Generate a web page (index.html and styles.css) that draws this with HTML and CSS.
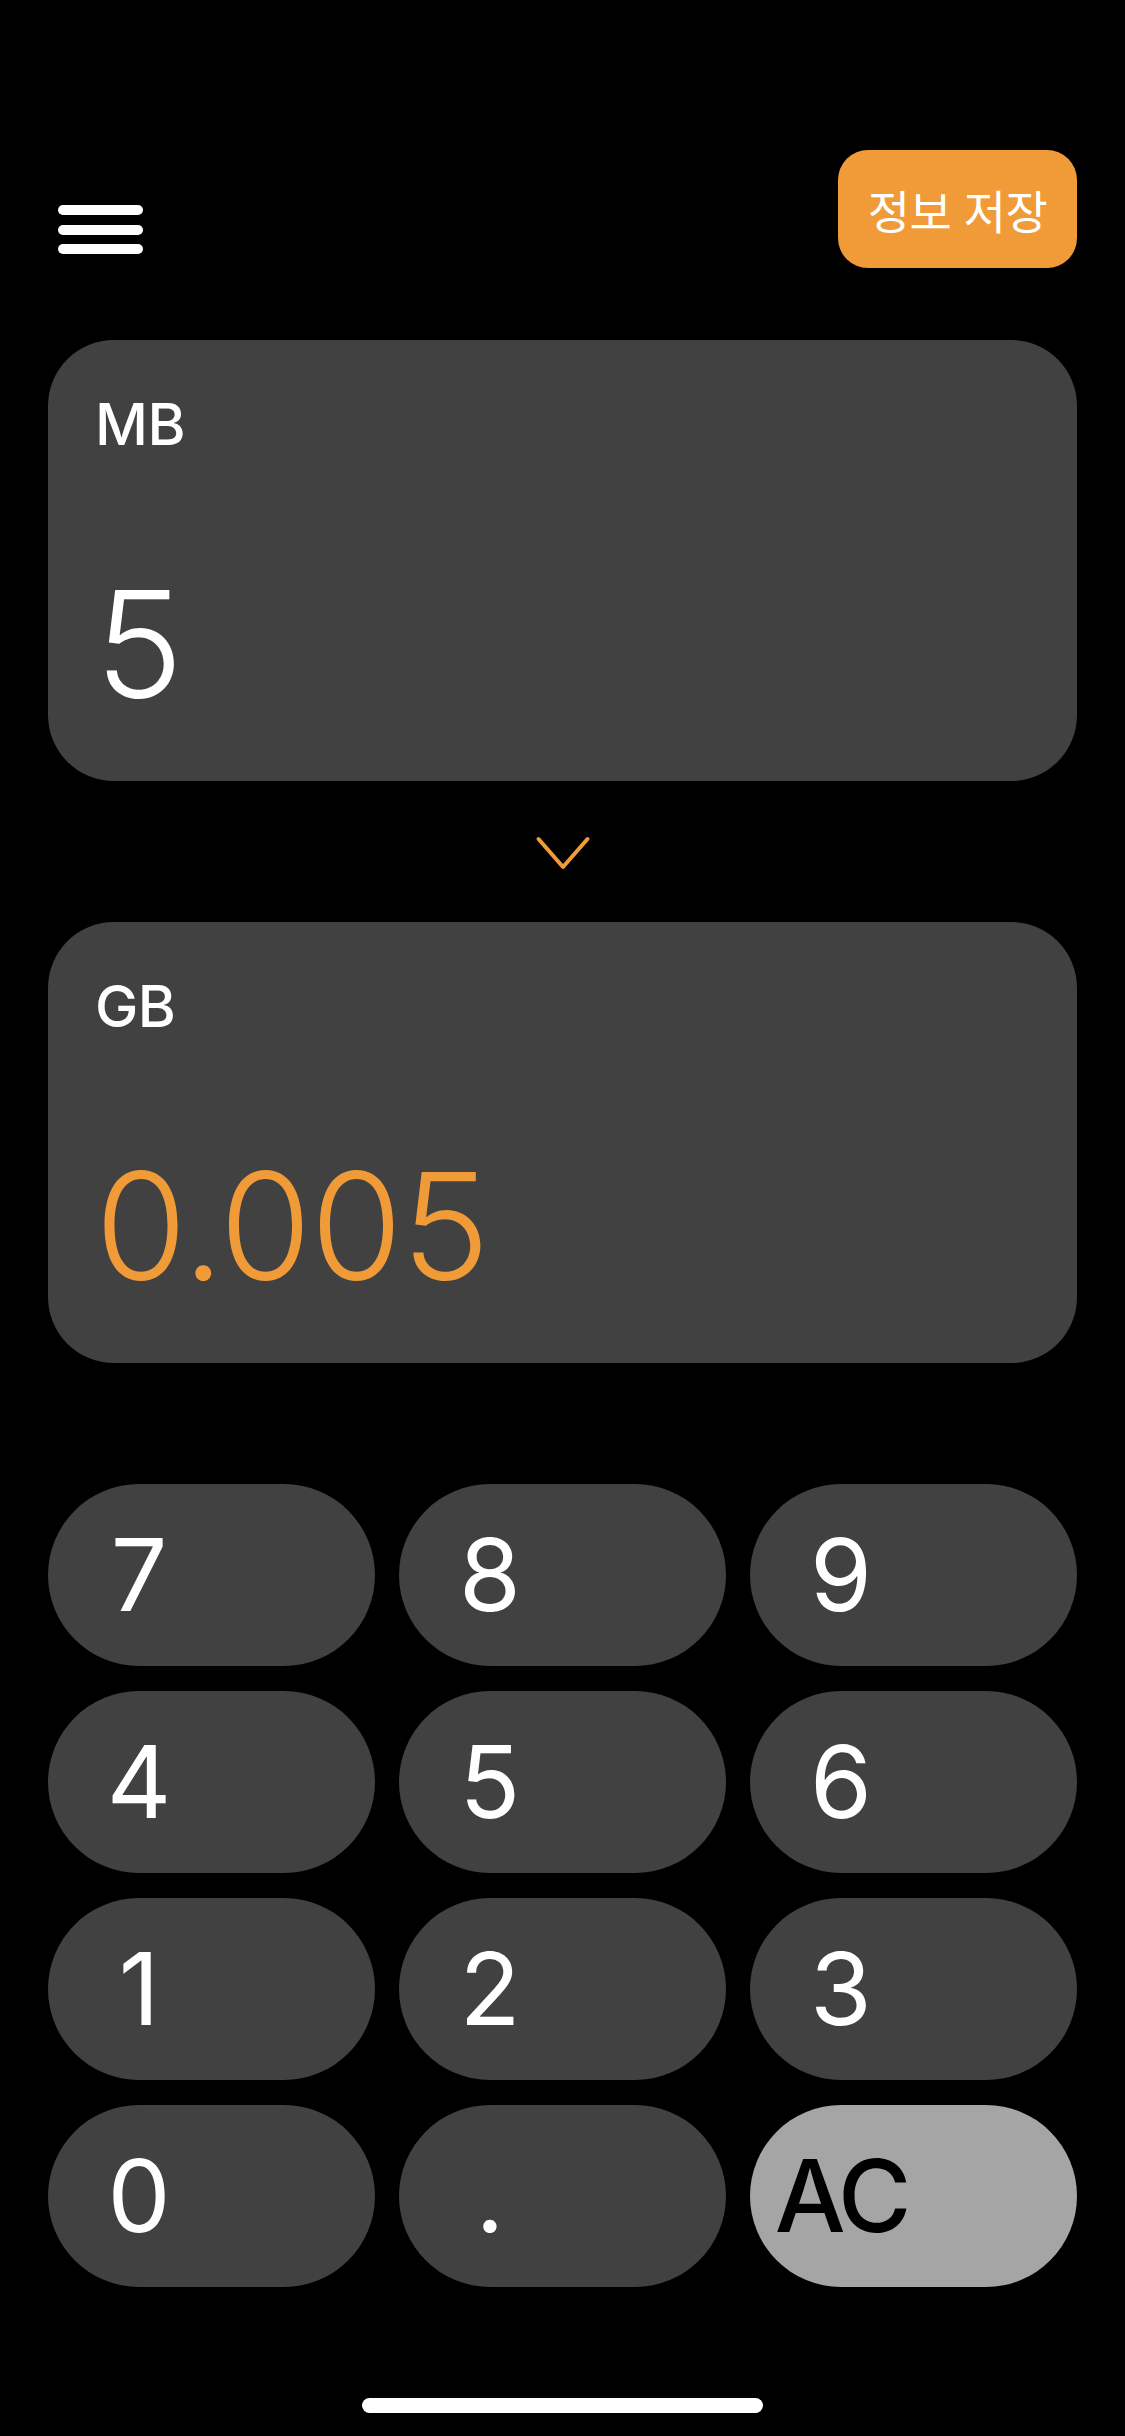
FILE: index.html
```html
<!DOCTYPE html>
<html lang="ko">
<head>
<meta charset="utf-8">
<title>MB → GB</title>
<link rel="stylesheet" href="styles.css">
</head>
<body>
<div class="screen">
  <header class="topbar">
    <div class="menu" aria-label="menu">
      <span class="menu-line"></span>
      <span class="menu-line"></span>
      <span class="menu-line"></span>
    </div>
    <button class="save-btn">정보 저장</button>
  </header>

  <section class="card">
    <div class="unit">MB</div>
    <div class="value">5</div>
  </section>

  <div class="arrow-row">
    <svg class="chevron" width="56" height="34" viewBox="0 0 56 34">
      <polyline points="3.5,3 28,31 52.5,3" fill="none" stroke="#F09A38" stroke-width="4" stroke-linecap="round" stroke-linejoin="round"/>
    </svg>
  </div>

  <section class="card">
    <div class="unit">GB</div>
    <div class="value result">0.005</div>
  </section>

  <div class="keypad">
    <button class="key"><span class="key-label">7</span></button>
    <button class="key"><span class="key-label">8</span></button>
    <button class="key"><span class="key-label">9</span></button>
    <button class="key"><span class="key-label">4</span></button>
    <button class="key"><span class="key-label">5</span></button>
    <button class="key"><span class="key-label">6</span></button>
    <button class="key"><span class="key-label">1</span></button>
    <button class="key"><span class="key-label">2</span></button>
    <button class="key"><span class="key-label">3</span></button>
    <button class="key"><span class="key-label">0</span></button>
    <button class="key"><span class="key-label">.</span></button>
    <button class="key key-ac"><span class="key-label">AC</span></button>
  </div>

  <div class="home-indicator"></div>
</div>
</body>
</html>
```

FILE: styles.css
```css
html, body {
  margin: 0;
  padding: 0;
  background: #000;
}

body {
  font-family: Inter, "Noto Sans", "Liberation Sans", "Noto Sans CJK KR", sans-serif;
  color: #fff;
}

.screen {
  width: 1125px;
  height: 2436px;
  box-sizing: border-box;
  padding: 150px 48px 0 48px;
  display: flex;
  flex-direction: column;
}

.topbar {
  display: flex;
  justify-content: space-between;
  align-items: flex-end;
  height: 118px;
}

.menu {
  display: flex;
  flex-direction: column;
  gap: 9.5px;
  width: 85px;
  margin-left: 10px;
  margin-bottom: 14px;
}

.menu-line {
  display: block;
  height: 10px;
  background: #fff;
  border-radius: 5px;
}

.save-btn {
  width: 239px;
  height: 118px;
  border: none;
  border-radius: 30px;
  background: #F09A38;
  color: #fff;
  font-family: "Noto Sans CJK KR", sans-serif;
  font-size: 46px;
  font-weight: 400;
  letter-spacing: -0.5px;
  padding: 0;
  display: flex;
  align-items: center;
  justify-content: center;
}

.card {
  margin-top: 72px;
  height: 441px;
  box-sizing: border-box;
  background: #414141;
  border-radius: 66px;
  padding: 55px 40px 0 47px;
  display: flex;
  flex-direction: column;
}

.arrow-row + .card {
  margin-top: 0;
}

.unit {
  font-size: 58px;
  line-height: 58px;
  font-weight: 550;
  letter-spacing: -0.5px;
}

.value {
  margin-top: 117px;
  font-size: 149px;
  line-height: 149px;
  font-weight: 300;
  letter-spacing: -1px;
}

.value.result {
  color: #F09A38;
}

.arrow-row {
  height: 141px;
  display: flex;
  align-items: center;
  justify-content: center;
}

.chevron {
  display: block;
  margin-top: 3px;
}

.keypad {
  margin-top: 121px;
  display: grid;
  grid-template-columns: repeat(3, 327px);
  grid-auto-rows: 182px;
  column-gap: 24px;
  row-gap: 25px;
}

.key {
  border: none;
  padding: 0;
  background: #414141;
  border-radius: 91px;
  color: #fff;
  font-family: Inter, "Liberation Sans", sans-serif;
  font-size: 100px;
  font-weight: 400;
  display: flex;
  align-items: center;
  justify-content: flex-start;
}

.key-label {
  width: 182px;
  text-align: center;
  line-height: 1;
}

.key-ac {
  background: #A5A5A5;
  color: #000;
}

.key-ac .key-label {
  font-weight: 500;
  letter-spacing: -4px;
}

.home-indicator {
  margin: 111px auto 0 auto;
  width: 401px;
  height: 15px;
  background: #fff;
  border-radius: 8px;
}
```
